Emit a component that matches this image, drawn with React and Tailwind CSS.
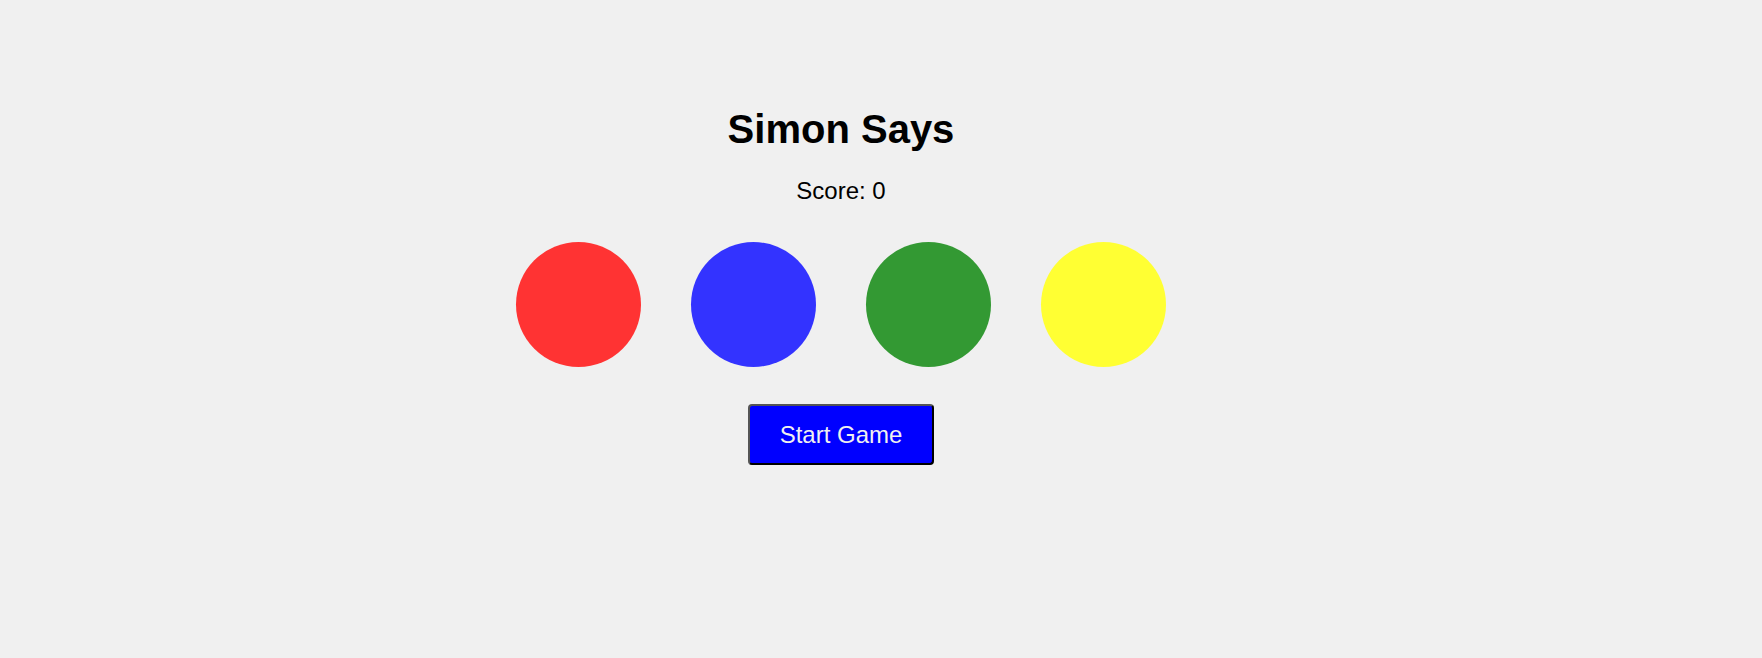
export default function App() {
  const circles = ["bg-[#ff3333]", "bg-[#3333ff]", "bg-[#339933]", "bg-[#ffff33]"];
  return (
    <div className="min-h-[658px] w-full bg-[#f0f0f0]" style={{ fontFamily: '"Liberation Sans", Arial, sans-serif' }}>
      <div className="w-[1682px] flex flex-col items-center pt-[106px]">
        <h1 className="text-[40px] leading-[46px] font-bold text-black">Simon Says</h1>
        <p className="mt-[25px] text-[24px] leading-[28px] text-black">Score: 0</p>
        <div className="mt-[37px] flex gap-[50px]">
          {circles.map((c, i) => (
            <div key={i} className={`w-[125px] h-[125px] rounded-full ${c}`} />
          ))}
        </div>
        <button className="mt-[37px] h-[61px] px-[30px] text-[24px] leading-[28px] text-[#f0f0f0] bg-[#0000ff] border-2 border-t-[#555555] border-l-[#555555] border-r-black border-b-black rounded-[4px]">
          Start Game
        </button>
      </div>
    </div>
  );
}
